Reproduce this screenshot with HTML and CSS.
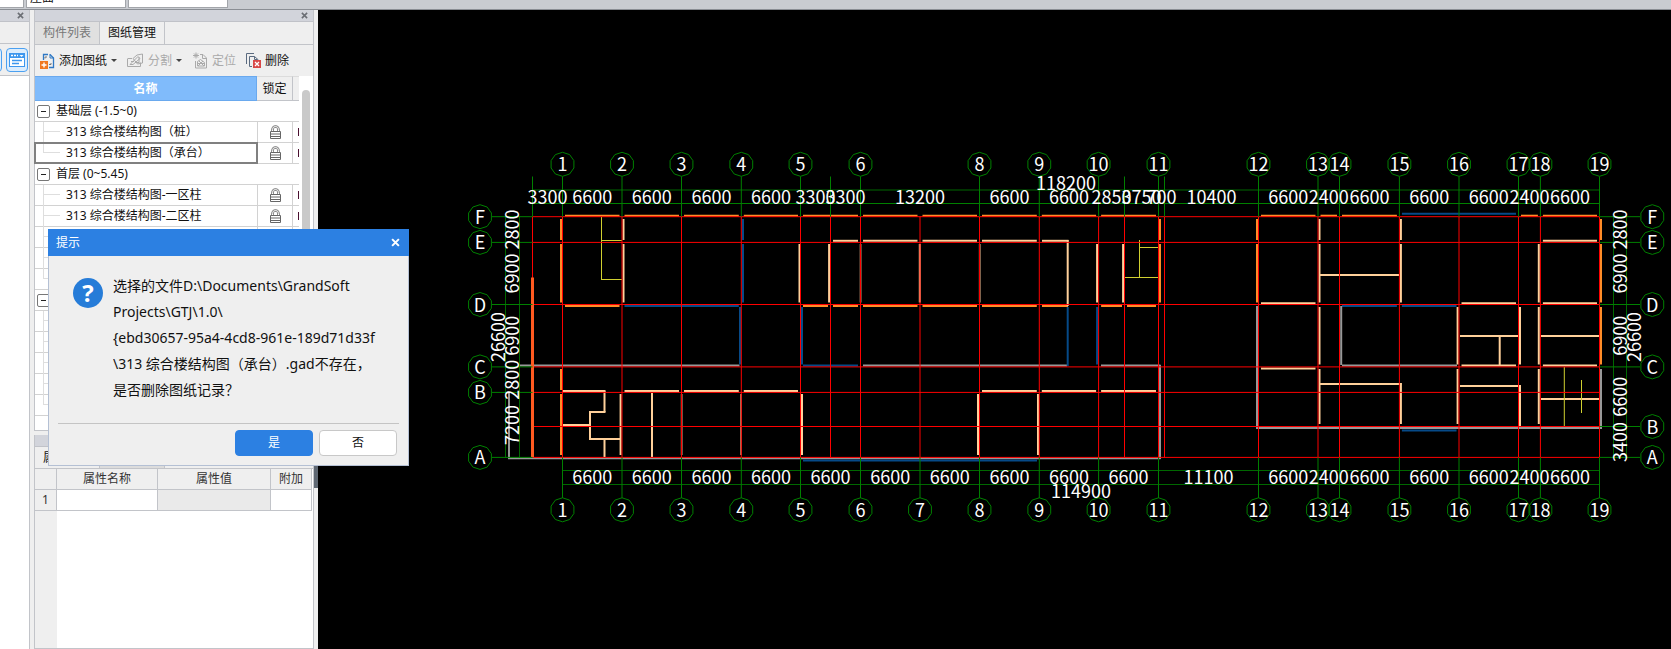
FILE: index.html
```html
<!DOCTYPE html>
<html lang="zh-CN">
<head>
<meta charset="utf-8">
<title>图纸管理</title>
<link rel="stylesheet" href="styles.css">
</head>
<body>
<svg class="defs" aria-hidden="true">
  <symbol id="lock" viewBox="0 0 11 14">
    <path d="M2.500 7V4.500a3 3 0 0 1 6 0V7" fill="none" stroke="#777" stroke-width="2.600"/>
    <path d="M2.500 7V4.500a3 3 0 0 1 6 0V7" fill="none" stroke="#fff" stroke-width="1"/>
    <path d="M.5 6.500h10v7H.5zM.5 9h10M.5 11.500h10" fill="#fff" stroke="#666"/>
  </symbol>
  <symbol id="cross" viewBox="0 0 8 8">
    <path d="M1 1l6 6M7 1L1 7" fill="none" stroke="currentColor" stroke-width="1.800"/>
  </symbol>
</svg>
<div class="app">
  <header class="topbar">
    <input class="field first" aria-label="楼层">
    <input class="field" aria-label="构件" value="屋面">
    <input class="field" aria-label="类型">
  </header>
  <div class="main">
    <aside class="strip">
      <div class="caption"><button class="close" aria-label="关闭"><svg><use href="#cross"/></svg></button></div>
      <div class="strip-space"></div>
      <div class="strip-tools">
        <button class="view-btn" aria-label="列表"></button>
        <button class="view-btn" aria-label="视图">
          <svg width="16" height="14" viewBox="0 0 16 14"><path d="M0 0h16v14H0z" fill="#3d97ee"/><path d="M1 5h14v8H1z" fill="#fff"/><path d="M2 2.500h2m1 0h2m1 0h1" stroke="#fff" stroke-width="1.500"/><path d="M10.500 2h4l-2 2z" fill="#fff"/><path d="M3 7.500h10M3 10.500h7" stroke="#3d97ee" stroke-width="1.300"/></svg>
        </button>
      </div>
    </aside>

    <div class="dock">
      <section class="panel drawings">
        <div class="caption"><button class="close" aria-label="关闭"><svg><use href="#cross"/></svg></button></div>
        <nav class="tabs">
          <button class="tab">构件列表</button>
          <button class="tab active">图纸管理</button>
        </nav>
        <div class="toolbar">
          <button class="tool add">
            <svg width="15" height="16" viewBox="0 0 15 16"><path d="M3.500 7V1.500H8M11 14.500h2.500V5L10 1.500M9 14.500h4" fill="none" stroke="#2f78c4" stroke-width="1.300"/><path d="M10 1v4h4" fill="none" stroke="#2f78c4"/><path d="M5 5.500V4h2M9 11.500h2V10" fill="none" stroke="#777"/><path d="M0 8h8v8H0z" fill="#f07820"/><path d="M4 9.500v5M1.500 12h5" stroke="#fff" stroke-width="1.400"/></svg>
            <span>添加图纸</span><i class="caret"></i>
          </button>
          <button class="tool split" disabled>
            <svg width="17" height="15" viewBox="0 0 17 15" fill="none" stroke="#aaa"><path d="M1 5.500h4M.5 5.500v8h13v-4M6 5.500L10 2l5.500-1v9l-5 1z"/><path d="M3 11.500l8-8 2 2-7 6zM8 9.500h4M12 4v6M4 8.500h3"/></svg>
            <span>分割</span><i class="caret"></i>
          </button>
          <button class="tool locate" disabled>
            <svg width="16" height="17" viewBox="0 0 16 17" fill="none" stroke="#aaa"><path d="M1 3.500h6M4 .5v6M2 1.500l4 4M2 5.500l4-4M8 2.500h3l3.500 3.500v10h-11V9M10.500 3v3.500H14"/><path d="M5.500 14V9.500l3-2 4 3V14zM6 11.500h6M6 14l5-5M7 9l5 5"/></svg>
            <span>定位</span>
          </button>
          <button class="tool remove">
            <svg width="15" height="15" viewBox="0 0 15 15" fill="none"><path d="M.5 11V.5H8M3.500 13.500V3.500h5L12.500 7" stroke="#5b6b80"/><path d="M8.500 3.500v3h3M3.500 13.500H6" stroke="#5b6b80"/><path d="M7 7h8v8H7z" fill="#d94848"/><path d="M9 9l4 4M13 9l-4 4" stroke="#fff" stroke-width="1.300"/></svg>
            <span>删除</span>
          </button>
        </div>
        <div class="tree-wrap">
          <table class="tree">
            <colgroup><col><col class="c-lock"><col class="c-more"></colgroup>
            <thead><tr><th class="name">名称</th><th>锁定</th><th></th></tr></thead>
            <tbody id="tree"></tbody>
          </table>
          <div class="scroll"><div class="thumb"></div></div>
        </div>
      </section>

      <section class="panel props">
        <div class="caption"></div>
        <nav class="tabs">
          <button class="tab active">属性列表</button>
          <button class="tab" aria-label="图层"></button>
        </nav>
        <div class="props-body">
          <table class="grid">
            <colgroup><col class="g-no"><col class="g-name"><col><col class="g-add"></colgroup>
            <thead><tr><th></th><th>属性名称</th><th>属性值</th><th>附加</th></tr></thead>
            <tbody><tr><th>1</th><td></td><td class="value"></td><td></td></tr></tbody>
          </table>
          <div class="gutter"></div>
        </div>
      </section>
    </div>
    <div class="splitter"><i></i></div>

    <main class="canvas">
      <svg id="plan" viewBox="318 10 1353 639" preserveAspectRatio="xMidYMid meet"></svg>
    </main>
  </div>

  <div class="dialog" role="dialog" aria-labelledby="dlg-title">
    <div class="dlg-title"><span id="dlg-title">提示</span><button class="dlg-close" aria-label="关闭"><svg><use href="#cross"/></svg></button></div>
    <div class="dlg-body">
      <span class="question">?</span>
      <p class="message">选择的文件D:\Documents\GrandSoft
Projects\GTJ\1.0\
{ebd30657-95a4-4cd8-961e-189d71d33f
\313 综合楼结构图（承台）.gad不存在，
是否删除图纸记录？</p>
    </div>
    <div class="dlg-actions"><button class="btn primary">是</button><button class="btn">否</button></div>
  </div>
</div>
<script src="app.js"></script>
</body>
</html>
```
FILE: styles.css
```css
* { box-sizing: border-box; }
html, body { height: 100%; }
body {
  margin: 0;
  overflow: hidden;
  background: #efefef;
  color: #111;
  font: 12px/20px "Noto Sans", "Noto Sans CJK SC", sans-serif;
}
button, input { font: inherit; color: inherit; margin: 0; padding: 0; border: 0; background: none; }
button { white-space: nowrap; }
table { border-collapse: separate; border-spacing: 0; table-layout: fixed; width: 100%; }
th, td { padding: 0; font-weight: 400; text-align: center; }
svg { display: block; }
.defs { position: absolute; width: 0; height: 0; }

.app { position: relative; height: 100vh; display: flex; flex-direction: column; }

.topbar {
  flex: none;
  height: 10px;
  display: flex;
  align-items: flex-end;
  gap: 2px;
  padding-bottom: 1px;
  overflow: hidden;
  background: #c9ccd1;
  border-bottom: 1px solid #8a8e94;
}
.field { flex: none; width: 100px; height: 22px; padding: 0 3px; background: #fff; border: 1px solid #a2a5aa; }
.field.first { width: 24px; border-left: 0; }

.main { flex: 1; min-height: 0; display: flex; }

.caption { flex: none; height: 12px; display: flex; align-items: center; justify-content: flex-end; padding-right: 5px; background: #d2d4db; border-bottom: 1px solid #c0c2c8; }
.close { color: #6b6e74; }
.close svg { width: 7px; height: 7px; }

.strip { flex: none; width: 30px; display: flex; flex-direction: column; background: #fff; border-right: 1px solid #c2c4c9; }
.strip-space { height: 22px; background: #efefef; border-bottom: 1px solid #c2c4c9; }
.strip-tools { height: 32px; display: flex; align-items: center; justify-content: flex-end; gap: 4px; padding-right: 1px; overflow: hidden; background: #efefef; border-bottom: 1px solid #c2c4c9; }
.view-btn { flex: none; width: 22px; height: 24px; display: flex; align-items: center; justify-content: center; border: 1px solid #4ba0f0; border-radius: 4px; background: #dcedfd; }

.dock { flex: none; width: 280px; margin-left: 4px; display: flex; flex-direction: column; gap: 4px; }
.panel { display: flex; flex-direction: column; border: 1px solid #c2c4c9; border-top: 0; background: #efefef; }
.tabs { flex: none; height: 23px; display: flex; border-bottom: 1px solid #c2c4c9; }
.tab { width: 65px; background: #e0e0e0; border-right: 1px solid #c2c4c9; color: #777; }
.tab.active { background: #efefef; color: #111; }
.toolbar { flex: none; height: 31px; display: flex; align-items: center; gap: 10px; padding: 0 5px; }
.tool { display: flex; align-items: center; gap: 4px; }
.tool:disabled { color: #aaa; }
.caret { border: 3px solid transparent; border-top-color: #444; border-bottom: 0; width: 0; }

.drawings { flex: none; }
.tree-wrap { display: flex; align-items: stretch; background: #fff; padding-bottom: 14px; }
.tree { flex: 1; min-width: 0; }
.c-lock { width: 36px; }
.c-more { width: 6px; }
.tree thead th { height: 25px; background: #efefef; border-right: 1px solid #c2c4c9; border-bottom: 1px solid #c2c4c9; border-top: 1px solid #dcdcdc; }
.tree thead th:last-child { border-right: 0; }
.tree thead .name { background: #80bbfb; color: #fff; font-weight: 700; border-color: #6aa9ee; }
.tree td { height: 21px; border-bottom: 1px solid #d2d2d2; }
.tree td.lock { border-right: 1px solid #d2d2d2; border-left: 1px solid #d2d2d2; }
.tree td.lock svg { width: 11px; height: 14px; margin: 0 auto; }
.tree td.more { overflow: hidden; }
.tree td.more i { display: block; width: 1px; height: 8px; margin-left: auto; background: #4a1030; }
.row { display: flex; align-items: center; height: 20px; white-space: nowrap; }
.toggle { width: 13px; height: 13px; margin: 0 6px 0 2px; border: 1px solid #777; border-radius: 2px; background: #fff; display: flex; align-items: center; justify-content: center; }
.toggle::before { content: ""; width: 5px; height: 1px; background: #222; }
.branch { align-self: stretch; width: 17px; margin: 0 6px 0 8px; display: grid; grid-template-rows: 10px 11px; height: 21px; border-left: 1px solid #dedede; }
.branch::before { content: ""; border-bottom: 1px solid #dedede; }
.last .branch { height: 10px; grid-template-rows: 10px; }
.selected .row { outline: 2px solid #808080; outline-offset: -1px; }
.scroll { flex: none; width: 14px; padding: 14px 3px 0; }
.thumb { height: 100%; border-radius: 4px; background: #c9c9c9; }

.props { flex: 1; min-height: 0; }
.props .tabs { height: 22px; }
.props .tab { background: #dcdcdc; }
.props .tab.active { background: #efefef; }
.props-body { flex: 1; display: flex; flex-direction: column; background: #fff; padding-right: 1px; }
.g-no { width: 22px; }
.g-name { width: 101px; }
.g-add { width: 41px; }
.grid th, .grid td { height: 21px; border-right: 1px solid #c2c4c9; border-bottom: 1px solid #c2c4c9; }
.grid th { background: #efefef; color: #333; }
.grid .value { background: #eaeaea; }
.gutter { flex: 1; width: 22px; background: #efefef; }

.splitter { flex: none; width: 4px; display: flex; align-items: center; padding-top: 292px; }
.splitter i { width: 4px; height: 24px; background: #5f6873; }

.canvas { flex: 1; min-width: 0; background: #000; }
.canvas svg { width: 100%; height: 100%; }
.canvas text { font: 18px "Noto Sans CJK SC", sans-serif; fill: #fff; text-anchor: middle; }
.dim { stroke: #008000; fill: none; }
.faint { stroke: #006800; fill: none; }
.axis { stroke: #f00; fill: none; }
.orange { stroke: #ff8c28; stroke-width: 2; }
.heavy { stroke: #ff5a20; stroke-width: 3; }
.peach { stroke: #ffd09a; stroke-width: 2; }
.brown { stroke: #a07c60; stroke-width: 2; }
.gray { stroke: #989898; stroke-width: 2; }
.blue { stroke: #064a88; stroke-width: 2; }
.yellow { stroke: #d0d030; stroke-width: 1; }

.dialog { position: absolute; left: 48px; top: 229px; width: 361px; background: #efefef; border: 1px solid #b4c0d4; border-top: 0; }
.dlg-title { height: 27px; margin: 0 -1px; padding: 0 9px 0 8px; display: flex; align-items: center; justify-content: space-between; background: #2c80e2; color: #fff; }
.dlg-close svg { width: 9px; height: 9px; }
.dlg-body { display: flex; gap: 10px; padding: 17px 26px 20px 24px; margin: 0; }
.question { flex: none; width: 30px; height: 30px; margin-top: 5px; border-radius: 50%; background: #267cd8; color: #fff; font: 700 24px/30px "Open Sans", sans-serif; text-align: center; }
.message { flex: 1; min-width: 0; margin: 0; overflow: hidden; white-space: pre; font-size: 14px; line-height: 26px; }
.dlg-actions { display: flex; justify-content: flex-end; gap: 6px; margin: 0 9px; padding: 6px 2px 9px; border-top: 1px solid #c4c4c4; }
.btn { width: 78px; height: 26px; border: 1px solid #c8c8c8; border-radius: 4px; background: #fff; }
.btn.primary { background: #2c80e2; border-color: #2c80e2; color: #fff; }
```
FILE: app.js
```js
// Drawing list
const rows = [
  ['基础层 (-1.5~0)'],
  ['', '313 综合楼结构图（桩）'],
  ['', '313 综合楼结构图（承台）', 'selected last'],
  ['首层 (0~5.45)'],
  ['', '313 综合楼结构图-一区柱'],
  ['', '313 综合楼结构图-二区柱'],
  ['', ''], ['', ''], ['', '', 'last'],
  [' '],
  ['', ''], ['', ''], ['', ''], ['', ''], ['', '', 'last']
];
document.getElementById('tree').innerHTML = rows.map(([group, name, cls = '']) => group
  ? `<tr><td colspan="3"><div class="row"><button class="toggle" aria-label="折叠"></button>${group}</div></td></tr>`
  : `<tr class="${cls}"><td><div class="row"><span class="branch"></span>${name}</div></td>` +
    `<td class="lock"><svg><use href="#lock"/></svg></td><td class="more"><i></i></td></tr>`
).join('');

// Axis positions
const X = { 0: 532.5, 1: 562.5, 2: 622, 3: 681.5, 4: 741.3, 5: 800.5, '5b': 830.5, 6: 860.5, 7: 920, 8: 979.5,
  9: 1039.3, 10: 1098.6, '10b': 1124.5, 11: 1158.5, '11b': 1164.5, 12: 1258.5, 13: 1318, 14: 1339.5,
  15: 1399.4, 16: 1459, 17: 1518.5, 18: 1540.4, 19: 1599.5 };
const Y = { F: 216.7, E: 242.4, D: 304.5, C: 366.9, B: 392.4, b: 426.5, A: 457.4 };
const out = [];
const line = (cls, x1, y1, x2, y2) => out.push(`<line class="${cls}" x1="${x1}" y1="${y1}" x2="${x2}" y2="${y2}"/>`);
const text = (s, x, y) => out.push(`<text x="${x}" y="${y}">${s}</text>`);
const vtext = (s, x, y) => out.push(`<text transform="translate(${x} ${y}) rotate(-90)">${s}</text>`);
const bubble = (s, x, y) => {
  const p = [];
  for (let i = 0; i < 10; i++) {
    const a = i * Math.PI / 5 + Math.PI / 2;
    p.push((x + 12 * Math.cos(a)).toFixed(1) + ',' + (y + 12 * Math.sin(a)).toFixed(1));
  }
  out.push(`<polygon class="dim" points="${p.join(' ')}"/>`);
  text(s, x, y + 7);
};

// Walls: horizontal [y, x1, x2] and vertical [x, y1, y2]
const H = (cls, y, list) => list.forEach(([a, b]) => line(cls, a, y, b, y));
const V = (cls, x, list) => list.forEach(([a, b]) => line(cls, x, a, x, b));
const bay = (...pairs) => pairs.map(([a, b]) => [X[a] + 2.5, X[b] - 2.5]);
const FE = [219, 240], ED = [244, 302.5], DC = [307, 364.5], CB = [369, 390], BA = [394, 455], Cb = [369, 424];

H('orange', 215.7, bay([1, 2], [2, 3], [3, 4], [4, 5], [5, 6], [6, 7], [7, 8], [8, 9], [9, 10], [10, 11], [12, 13], [13, 14], [14, 15], [17, 18], [18, 19]));
H('blue', 213.7, bay([15, 17]));
H('peach', 240.8, [...bay(['5b', 6], [6, 7], [7, 8], [8, 9], [18, 19]), [1042, 1068.5]]);
H('orange', 306, [...bay([1, 2], [5, '5b'], ['5b', 6], [6, 7], [7, 8], [8, 9], [10, '10b'], ['10b', 11]), [1042, 1068]]);
H('blue', 306, bay([2, 4], [14, 15], [15, 16]));
H('peach', 303.3, bay([12, 13], [16, 17], [18, 19]));
H('gray', 365.5, [[519.5, 739.5], [863, 1067], [1101, 1160.5], [1342, 1457]]);
H('blue', 365.5, bay([5, 6]));
H('peach', 365.5, bay([16, 17], [18, 19]));
H('peach', 368.4, bay([12, 13]));
H('peach', 391, [[562, 605.5], ...bay([2, 3], [3, 4], [4, 5], [8, 9], [9, 10], [10, 11])]);
H('gray', 428, [[1256, 1602]]);
H('blue', 430.5, bay([15, 16]));
H('gray', 458.3, [[508, 1160.5]]);
H('blue', 460.4, [[803, 1037]]);
H('peach', 275, [[1320, 1399]]);
H('peach', 384, [[1320, 1401.5]]);
H('peach', 386, [[1460, 1521]]);
H('peach', 399, [[1541, 1599]]);
H('peach', 336, [[1460, 1518], [1541, 1599]]);
H('peach', 425, [[563, 590]]);
H('peach', 412, [[589, 605.5]]);
H('peach', 439, [[589, 621]]);
V('peach', 590, [[411, 440]]);
V('peach', 604.5, [[391, 412], [440, 457]]);
V('peach', 652, [[393, 457]]);
V('orange', 561, [FE, ED, CB, BA]);
V('peach', 623.5, [FE, ED]);
V('peach', 620.6, [BA]);
V('brown', 681.7, [BA]);
V('brown', 741, [BA]);
V('blue', 743, [FE, ED]);
V('blue', 740, [DC]);
V('peach', 799.5, [ED]);
V('blue', 802, [DC]);
V('peach', 802, [BA]);
V('peach', 829.1, [ED]);
V('brown', 860.6, [ED]);
V('peach', 919.8, [ED]);
V('brown', 979.8, [ED]);
V('peach', 1067.7, [[240, 306]]);
V('blue', 1067.7, [[307, 366]]);
V('peach', 1097.1, [ED]);
V('blue', 1097.1, [DC]);
V('peach', 1123.1, [ED]);
V('orange', 1160, [FE, ED]);
V('gray', 1160, [[365, 459]]);
V('peach', 978, [BA]);
V('peach', 1038, [BA]);
V('orange', 1257, [FE, ED]);
V('gray', 1257, [[306, 428]]);
V('peach', 1319.5, [FE, ED, DC, Cb]);
V('gray', 1341.2, [[306, 365]]);
V('peach', 1400.9, [FE, ED, [383, 424]]);
V('peach', 1457.6, [DC, Cb]);
V('peach', 1520, [DC, [385, 426]]);
V('peach', 1538.8, [ED, DC, Cb]);
V('peach', 1499.7, [[336, 365]]);
V('orange', 1601, [FE, ED, DC]);
V('gray', 1601, [[369, 428]]);
V('gray', 509, [[392, 459]]);
V('yellow', 601.5, [[217, 280]]);
H('yellow', 240.5, [[601, 622]]);
H('yellow', 279.5, [[601, 622]]);
V('yellow', 1139.5, [[240, 277]]);
H('yellow', 247.5, [[1139, 1158]]);
H('yellow', 277.5, [[1125, 1158]]);
V('yellow', 1564.3, [[367, 426]]);
V('yellow', 1581.5, [[380, 413]]);

// Axes
Object.values(X).forEach(x => line('axis', x, Y.F, x, Y.A));
Object.values(Y).forEach(y => line('axis', X[0], y, X[19], y));
V('heavy', 532.5, [[277.5, 457]]);

// Dimension lines
line('faint', X[0], 190, X[19], 190);
line('dim', X[0], 203.5, X[19], 203.5);
line('faint', X[1], 470.5, X[19], 470.5);
line('faint', X[1], 484.5, X[19], 484.5);
[505.5, 519.5, 1613.5, 1626.5].forEach(x => line('faint', x, Y.F, x, Y.A));
Object.entries(X).forEach(([n, x]) => {
  if (n !== '7') line('dim', x, 176.5, x, Y.F);
  if (/^[1-9]\d*$/.test(n)) {
    line('dim', x, Y.A, x, 498);
    if (n !== '7') bubble(n, x, 164.3);
    bubble(n, x, 509.8);
  }
});
['F', 'E', 'D', 'C', 'B', 'A'].forEach(n => {
  const r = n === 'B' ? Y.b : Y[n];
  line('dim', 492, Y[n], X[0], Y[n]);
  line('dim', X[19], r, 1640, r);
  bubble(n, 480, Y[n]);
  bubble(n, 1652.3, r);
});

// Dimension values
const span = (y, list) => list.forEach(([s, a, b]) => text(s, (X[a] + X[b]) / 2, y));
const east = [[6600, 12, 13], [2400, 13, 14], [6600, 14, 15], [6600, 15, 16], [6600, 16, 17], [2400, 17, 18], [6600, 18, 19]];
const west = [[6600, 1, 2], [6600, 2, 3], [6600, 3, 4], [6600, 4, 5]];
span(203.5, [[3300, 0, 1], ...west, [3300, 5, '5b'], [3300, '5b', 6], [13200, 6, 8], [6600, 8, 9], [6600, 9, 10],
  [2850, 10, '10b'], [3750, '10b', 11], [700, 11, '11b'], [10400, '11b', 12], ...east]);
span(484, [...west, [6600, 5, 6], [6600, 6, 7], [6600, 7, 8], [6600, 8, 9], [6600, 9, 10], [6600, 10, 11], [11100, 11, 12], ...east]);
text('118200', 1066, 190);
text('114900', 1081, 497.6);
const rise = (x, list) => list.forEach(([s, a, b]) => vtext(s, x, (Y[a] + Y[b]) / 2));
rise(519.3, [[2800, 'F', 'E'], [6900, 'E', 'D'], [6900, 'D', 'C'], [2800, 'C', 'B'], [7200, 'B', 'A']]);
rise(1626.6, [[2800, 'F', 'E'], [6900, 'E', 'D'], [6900, 'D', 'C'], [6600, 'C', 'b'], [3400, 'b', 'A']]);
rise(505.3, [[26600, 'F', 'A']]);
rise(1640.5, [[26600, 'F', 'A']]);
document.getElementById('plan').innerHTML = out.join('');
```
